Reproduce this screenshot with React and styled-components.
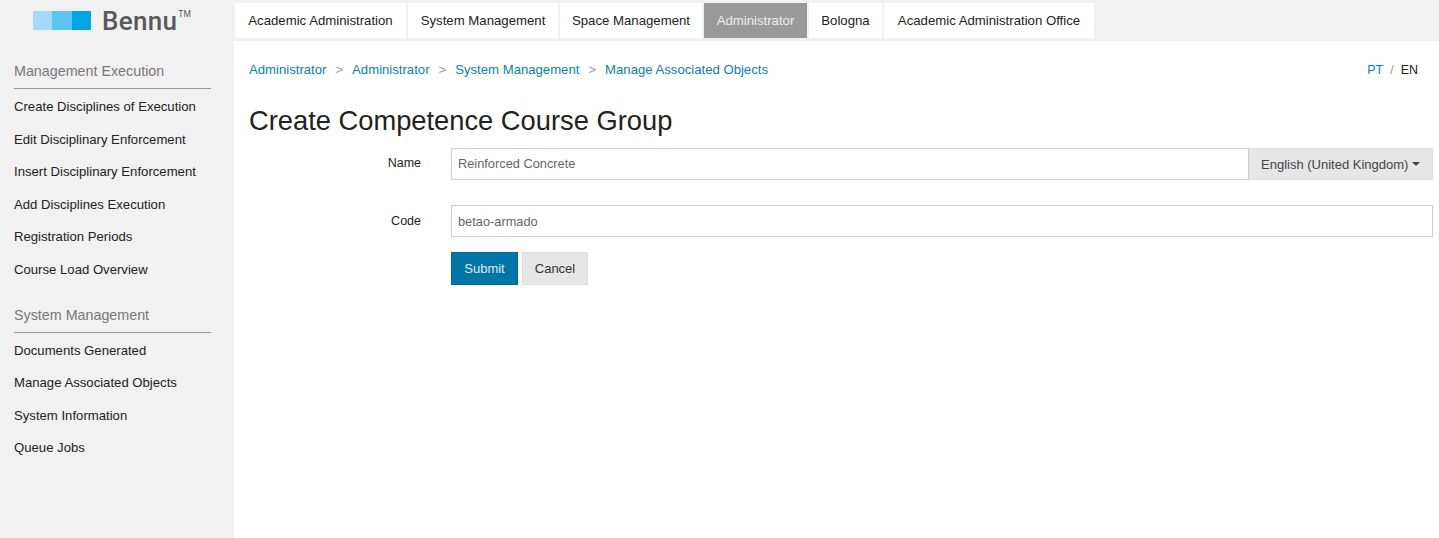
import React from "react";
import styled, { createGlobalStyle } from "styled-components";

const sideGroups = [
  {
    title: "Management Execution",
    items: [
      "Create Disciplines of Execution",
      "Edit Disciplinary Enforcement",
      "Insert Disciplinary Enforcement",
      "Add Disciplines Execution",
      "Registration Periods",
      "Course Load Overview",
    ],
  },
  {
    title: "System Management",
    items: [
      "Documents Generated",
      "Manage Associated Objects",
      "System Information",
      "Queue Jobs",
    ],
  },
];

const tabs = [
  { label: "Academic Administration", width: 171 },
  { label: "System Management", width: 150 },
  { label: "Space Management", width: 142 },
  { label: "Administrator", width: 103, active: true },
  { label: "Bologna", width: 73 },
  { label: "Academic Administration Office", width: 210 },
];

const crumbs = [
  "Administrator",
  "Administrator",
  "System Management",
  "Manage Associated Objects",
];

const App = () => {
  return (
    <Page>
      <GlobalStyle />
      <Sidebar>
        <Logo>
          <LogoMark>
            <LogoSquare $color="#a3daf9" />
            <LogoSquare $color="#5cc4f2" />
            <LogoSquare $color="#00a5e6" />
          </LogoMark>
          <LogoText>Bennu</LogoText>
          <LogoTm>TM</LogoTm>
        </Logo>
        {sideGroups.map((group) => (
          <SideGroup key={group.title}>
            <SideTitle>{group.title}</SideTitle>
            {group.items.map((item) => (
              <SideItem key={item}>{item}</SideItem>
            ))}
          </SideGroup>
        ))}
      </Sidebar>
      <Column>
        <TopBar>
          {tabs.map((tab) => (
            <Tab key={tab.label} $active={tab.active} $width={tab.width}>
              {tab.label}
            </Tab>
          ))}
        </TopBar>
        <Main>
          <CrumbRow>
            <Crumbs>
              {crumbs.map((crumb, i) => (
                <React.Fragment key={i}>
                  {i > 0 && <CrumbSep>&gt;</CrumbSep>}
                  <Link>{crumb}</Link>
                </React.Fragment>
              ))}
            </Crumbs>
            <Langs>
              <Link>PT</Link>
              <LangSep>/</LangSep>
              <span>EN</span>
            </Langs>
          </CrumbRow>
          <Title>Create Competence Course Group</Title>
          <Form>
            <Label>Name</Label>
            <InputGroup>
              <Input readOnly value="Reinforced Concrete" $nudge />
              <Addon>
                English (United Kingdom)
                <Caret />
              </Addon>
            </InputGroup>
            <Label $code>Code</Label>
            <Input readOnly value="betao-armado" $code />
            <Buttons>
              <Submit>Submit</Submit>
              <Cancel>Cancel</Cancel>
            </Buttons>
          </Form>
        </Main>
      </Column>
    </Page>
  );
};

const GlobalStyle = createGlobalStyle`
  html, body {
    margin: 0;
    height: 100%;
    background: #fff;
  }
  body {
    font-family: "Liberation Sans", Arial, sans-serif;
    font-size: 13px;
    color: #222;
  }
  * {
    box-sizing: border-box;
  }
`;

const Page = styled.div`
  display: flex;
  min-height: 538px;
`;

const Sidebar = styled.aside`
  flex: 0 0 234px;
  background: #f1f1f1;
  padding: 0 23px 0 14px;
`;
const Logo = styled.div`
  display: flex;
  align-items: flex-start;
  height: 53px;
  padding: 11px 0 0 19px;
`;
const LogoMark = styled.div`
  display: flex;
  height: 19px;
  margin-right: 11px;
`;
const LogoSquare = styled.div`
  width: 19.33px;
  background: ${(p) => p.$color};
`;
const LogoText = styled.span`
  font-family: "Roboto", sans-serif;
  font-size: 26px;
  font-weight: 500;
  line-height: 20px;
  letter-spacing: 0.3px;
  color: #58595b;
`;
const LogoTm = styled.span`
  font-family: "Roboto", sans-serif;
  font-size: 8.5px;
  font-weight: 400;
  line-height: 7px;
  letter-spacing: 0.3px;
  color: #58595b;
  margin-left: 1px;
`;

const SideGroup = styled.nav`
  margin-bottom: 10.8px;
`;
const SideTitle = styled.h4`
  margin: 0 0 2px;
  height: 36px;
  padding-top: 10px;
  font-size: 14.3px;
  line-height: 17px;
  font-weight: 400;
  color: #777;
  border-bottom: 1px solid #999;
`;
const SideItem = styled.a`
  display: block;
  height: 32.5px;
  line-height: 32.5px;
  font-size: 13.15px;
  color: #222;
`;

const Column = styled.div`
  flex: 1;
  min-width: 0;
`;
const TopBar = styled.header`
  display: flex;
  gap: 2px;
  height: 41px;
  padding: 3px 0 3px 1px;
  background: #f1f1f1;
`;
const Tab = styled.a`
  display: block;
  width: ${(p) => p.$width}px;
  text-align: center;
  line-height: 35px;
  font-size: 13.2px;
  background: ${(p) => (p.$active ? "#999" : "#fff")};
  color: ${(p) => (p.$active ? "#eee" : "#222")};
`;

const Main = styled.main`
  padding: 0 6px 0 15px;
`;
const CrumbRow = styled.div`
  display: flex;
  justify-content: space-between;
  align-items: center;
  height: 57px;
`;
const Crumbs = styled.div`
  display: flex;
  font-size: 13.15px;
`;
const Link = styled.a`
  color: #0a7fb5;
`;
const CrumbSep = styled.span`
  margin: 0 9px;
  color: #999;
`;
const Langs = styled.div`
  display: flex;
  font-size: 12.5px;
  padding-right: 15px;
  color: #222;
`;
const LangSep = styled.span`
  margin: 0 7px;
  color: #999;
`;
const Title = styled.h1`
  margin: 0;
  height: 50px;
  padding-top: 6px;
  font-size: 27.3px;
  line-height: 33px;
  font-weight: 400;
  color: #222;
`;

const Form = styled.form`
  display: grid;
  grid-template-columns: 172px 1fr;
  column-gap: 30px;
`;
const Label = styled.label`
  text-align: right;
  font-size: 12.5px;
  line-height: 14px;
  padding-top: ${(p) => (p.$code ? "9px" : "8px")};
  margin-top: ${(p) => (p.$code ? "25px" : "0")};
  color: #222;
`;
const InputGroup = styled.div`
  display: flex;
  height: 32px;
`;
const Input = styled.input`
  flex: 1;
  min-width: 0;
  width: 100%;
  height: 32px;
  margin-top: ${(p) => (p.$code ? "25px" : "0")};
  padding: 0 6px ${(p) => (p.$nudge ? "2px" : "0")};
  border: 1px solid #ccc;
  font: 12.8px "Liberation Sans", Arial, sans-serif;
  color: #666;
  outline: none;
`;
const Addon = styled.div`
  display: flex;
  align-items: center;
  width: 184px;
  padding-left: 12px;
  border: 1px solid #ddd;
  border-left: 0;
  background: #e6e6e6;
  font-size: 13px;
  color: #444;
`;
const Caret = styled.span`
  margin-left: 4px;
  border-top: 4px solid #444;
  border-left: 4px solid transparent;
  border-right: 4px solid transparent;
`;
const Buttons = styled.div`
  grid-column: 2;
  display: flex;
  gap: 4px;
  margin-top: 15px;
`;
const Submit = styled.button`
  height: 33px;
  width: 67px;
  padding: 0;
  border: 1px solid #006a94;
  background: #0076a8;
  color: #e8e8e8;
  font: 13px "Liberation Sans", Arial, sans-serif;
`;
const Cancel = styled.button`
  height: 33px;
  width: 66px;
  padding: 0;
  border: 1px solid #ddd;
  background: #e6e6e6;
  color: #333;
  font: 13px "Liberation Sans", Arial, sans-serif;
`;

export default App;
